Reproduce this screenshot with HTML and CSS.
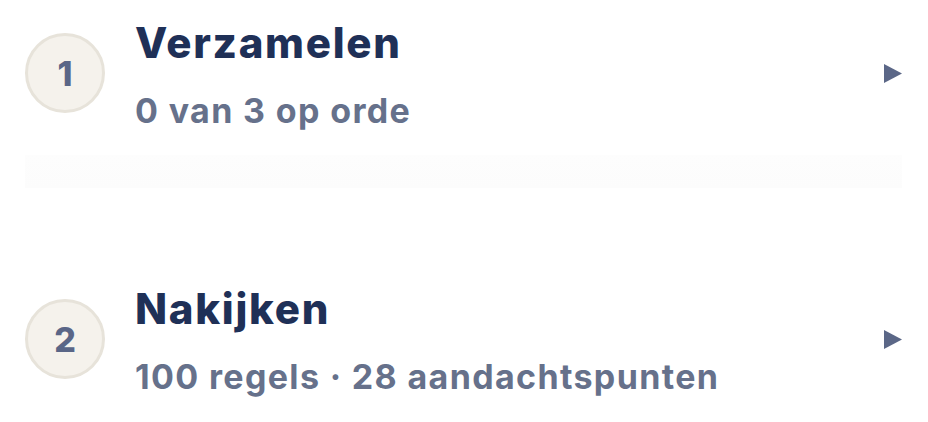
FILE: index.html
```html
<!DOCTYPE html>
<html lang="nl">
<head>
<meta charset="utf-8">
<link rel="stylesheet" href="styles.css">
</head>
<body>
<ul class="steps">
  <li class="step">
    <div class="badge">1</div>
    <div class="text">
      <div class="title">Verzamelen</div>
      <div class="sub">0 van 3 op orde</div>
    </div>
    <svg class="chev" width="18" height="19" viewBox="0 0 18 19"><polygon points="0,0 18,9.5 0,19" fill="#5b6787"/></svg>
  </li>
  <li class="band"></li>
  <li class="step second">
    <div class="badge">2</div>
    <div class="text">
      <div class="title">Nakijken</div>
      <div class="sub">100 regels · 28 aandachtspunten</div>
    </div>
    <svg class="chev" width="18" height="19" viewBox="0 0 18 19"><polygon points="0,0 18,9.5 0,19" fill="#5b6787"/></svg>
  </li>
</ul>
</body>
</html>
```
FILE: styles.css
```css
html, body {
  margin: 0;
  padding: 0;
  background: #ffffff;
}
body {
  font-family: Inter, Lato, "Noto Sans", sans-serif;
  width: 928px;
  height: 422px;
  overflow: hidden;
}
.steps {
  list-style: none;
  margin: 0;
  padding: 0 26px 0 25px;
}
.step {
  display: flex;
  align-items: center;
  height: 146px;
}
.step.second {
  margin-top: 78px;
}
.band {
  margin-top: 9px;
  height: 33px;
  background: linear-gradient(#fdfdfd, #fcfcfc);
}
.badge {
  flex: none;
  box-sizing: border-box;
  width: 80px;
  height: 80px;
  border: 3px solid #e7e3da;
  border-radius: 50%;
  background: #f5f2ec;
  color: #5a6687;
  font-weight: 800;
  font-size: 34px;
  display: flex;
  align-items: center;
  justify-content: center;
}
.text {
  flex: 1;
  margin-left: 30px;
  margin-top: 3px;
  display: flex;
  flex-direction: column;
}
.title {
  font-size: 42px;
  font-weight: 800;
  letter-spacing: 1.7px;
  color: #1f3057;
  line-height: 52px;
}
.sub {
  margin-top: 21px;
  font-size: 34px;
  font-weight: 700;
  letter-spacing: 1.35px;
  color: #66718b;
  line-height: 42px;
}
.chev {
  flex: none;
}
```
